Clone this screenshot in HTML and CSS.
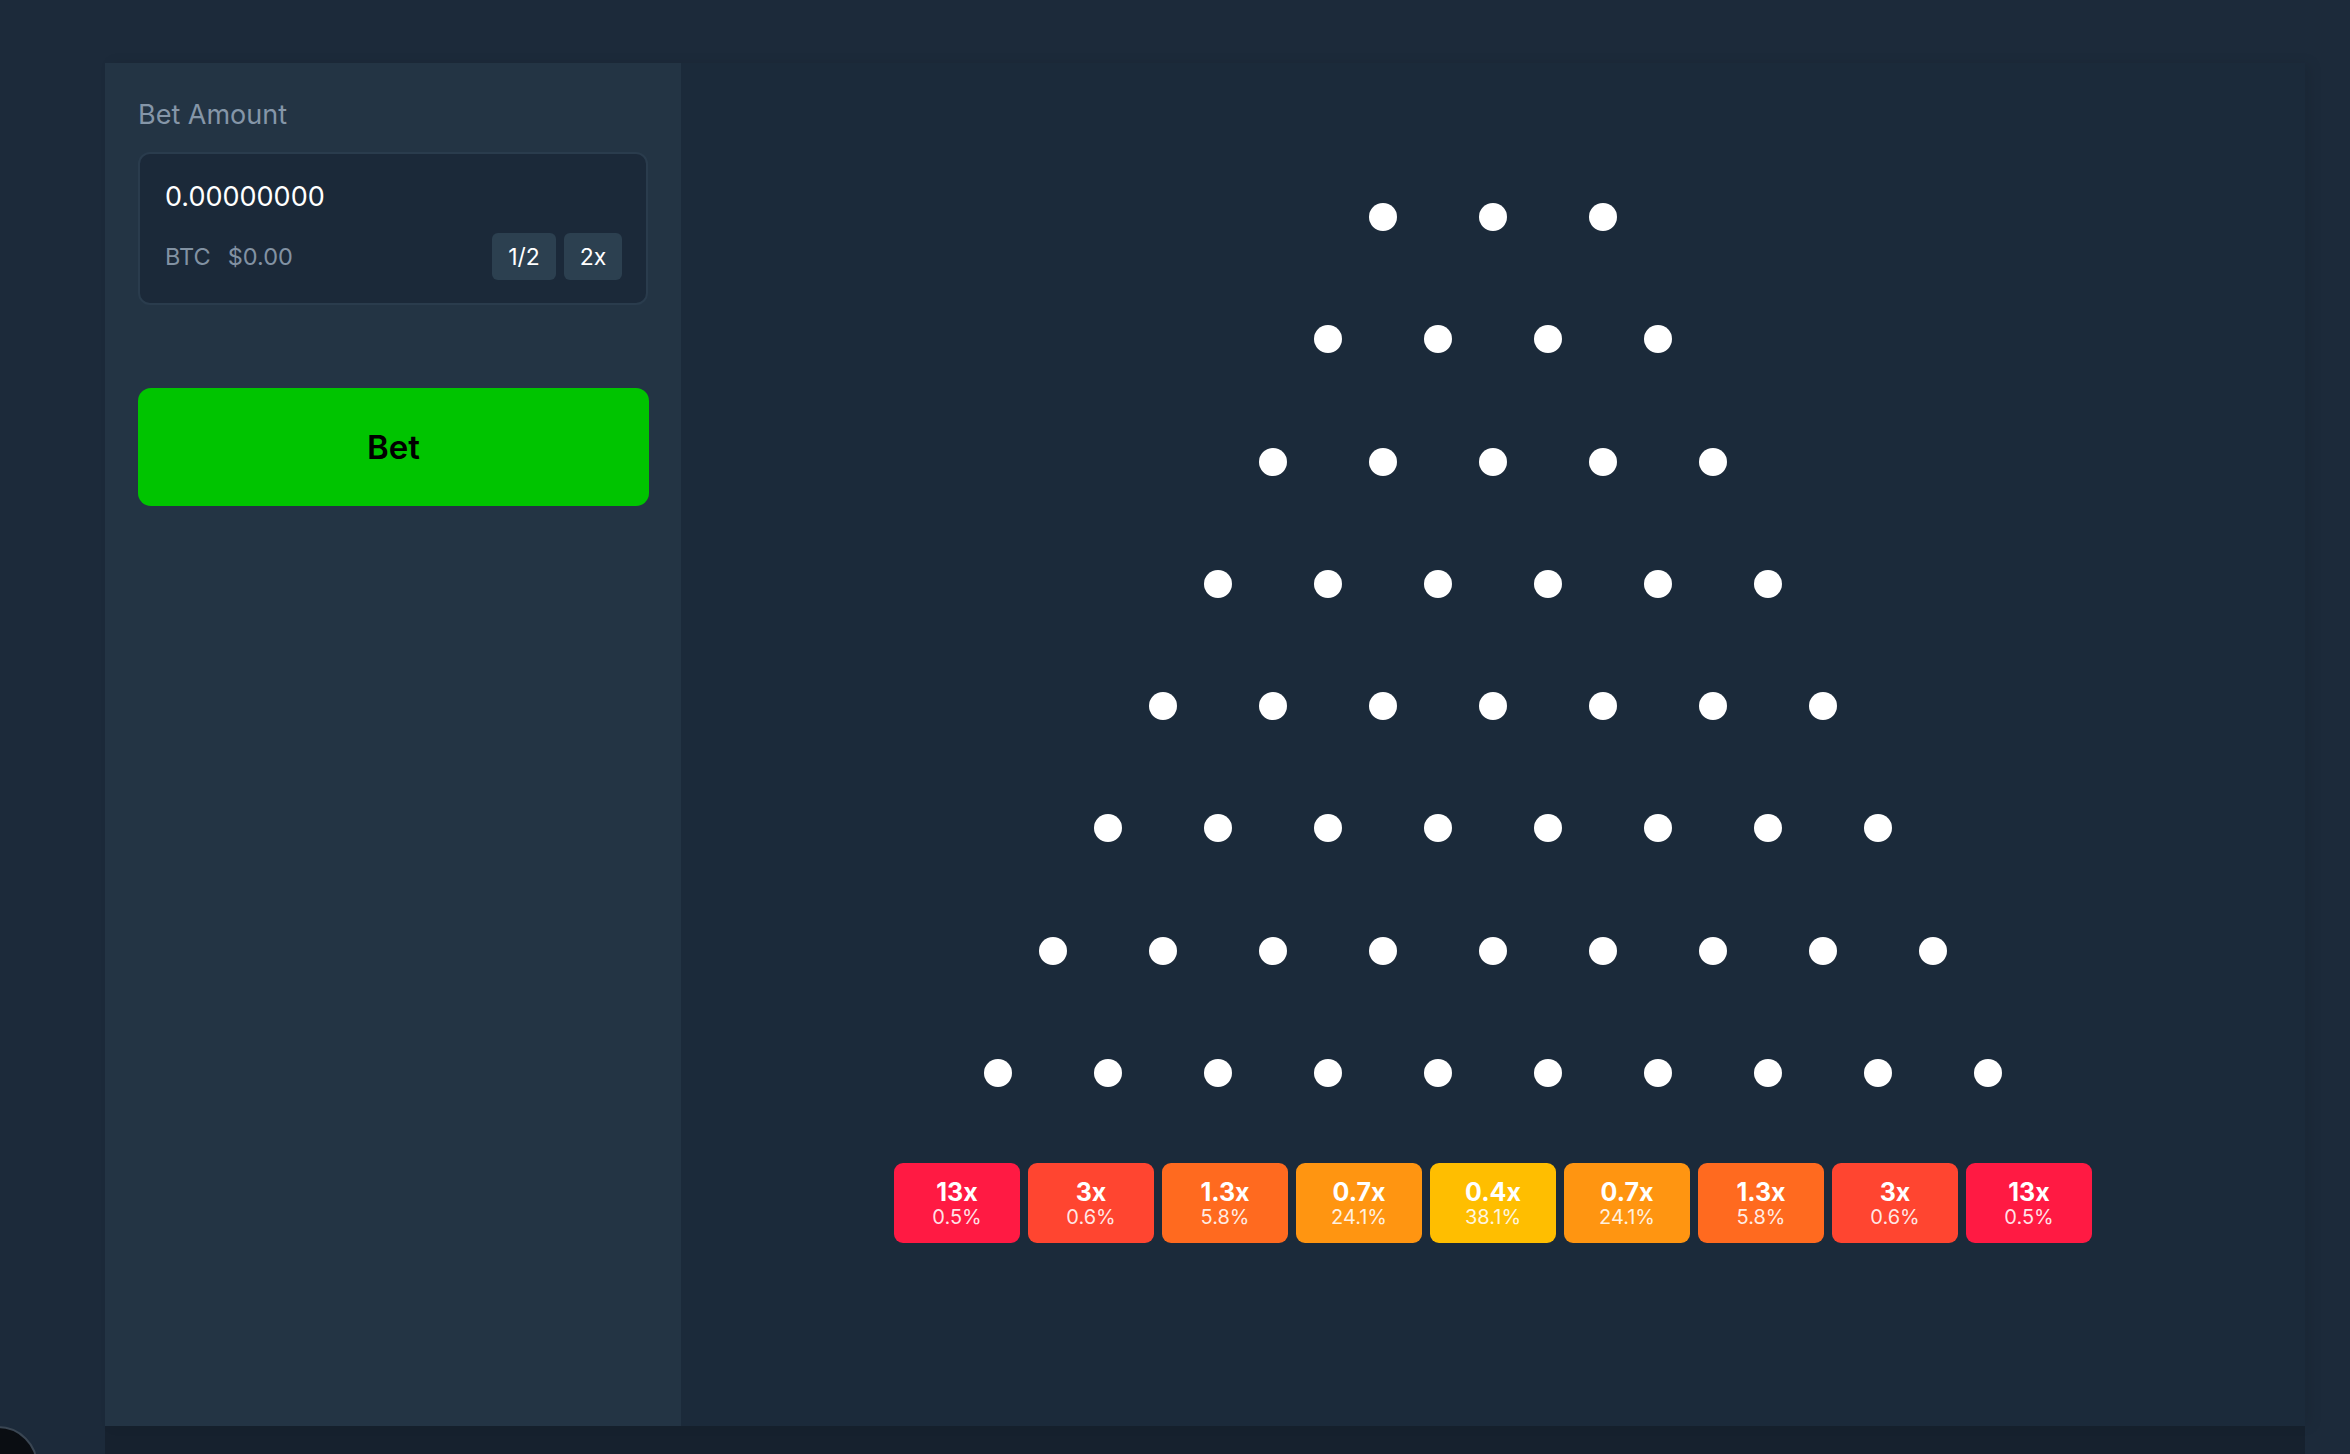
FILE: index.html
```html
<!DOCTYPE html>
<html>
<head>
<meta charset="utf-8">
<link rel="stylesheet" href="styles.css">
</head>
<body>
<div class="app">
  <aside class="sidebar">
    <div class="label">Bet Amount</div>
    <div class="amount-box">
      <div class="amount">0.00000000</div>
      <div class="amount-row">
        <div class="currency"><span>BTC</span><span>$0.00</span></div>
        <div class="quick">
          <button class="qbtn half">1/2</button>
          <button class="qbtn dbl">2x</button>
        </div>
      </div>
    </div>
    <button class="bet">Bet</button>
  </aside>
  <main class="game">
    <div class="board">
      <div class="row"><i></i><i></i><i></i></div>
      <div class="row"><i></i><i></i><i></i><i></i></div>
      <div class="row"><i></i><i></i><i></i><i></i><i></i></div>
      <div class="row"><i></i><i></i><i></i><i></i><i></i><i></i></div>
      <div class="row"><i></i><i></i><i></i><i></i><i></i><i></i><i></i></div>
      <div class="row"><i></i><i></i><i></i><i></i><i></i><i></i><i></i><i></i></div>
      <div class="row"><i></i><i></i><i></i><i></i><i></i><i></i><i></i><i></i><i></i></div>
      <div class="row"><i></i><i></i><i></i><i></i><i></i><i></i><i></i><i></i><i></i><i></i></div>
    </div>
    <div class="bins">
      <div class="bin c1"><b>13x</b><span>0.5%</span></div>
      <div class="bin c2"><b>3x</b><span>0.6%</span></div>
      <div class="bin c3"><b>1.3x</b><span>5.8%</span></div>
      <div class="bin c4"><b>0.7x</b><span>24.1%</span></div>
      <div class="bin c5"><b>0.4x</b><span>38.1%</span></div>
      <div class="bin c4"><b>0.7x</b><span>24.1%</span></div>
      <div class="bin c3"><b>1.3x</b><span>5.8%</span></div>
      <div class="bin c2"><b>3x</b><span>0.6%</span></div>
      <div class="bin c1"><b>13x</b><span>0.5%</span></div>
    </div>
  </main>
</div>
<div class="fab"></div>
</body>
</html>
```

FILE: styles.css
```css
* { box-sizing: border-box; }
html, body { margin: 0; padding: 0; }
body {
  background: #1c2a3a;
  width: 2350px;
  height: 1454px;
  overflow: hidden;
  font-family: Inter, "Noto Sans", sans-serif;
}
.app {
  margin: 63px 0 0 105px;
  width: 2200px;
  height: 1363px;
  display: flex;
  box-shadow: 0 28px 0 rgba(0, 0, 0, 0.2), 6px 0 12px rgba(0, 0, 0, 0.08);
  background: #1b2a3a;
}
.sidebar {
  width: 576px;
  flex: none;
  background: #233444;
  padding: 36px 33px 0 33px;
  display: flex;
  flex-direction: column;
}
.label {
  font-size: 27px;
  line-height: 32px;
  color: #8596a8;
  margin-bottom: 21px;
}
.amount-box {
  height: 153px;
  border: 2px solid #2a3c4d;
  border-radius: 12px;
  background: #1b2939;
  padding: 27px 24px 23px 25px;
  display: flex;
  flex-direction: column;
  gap: 20px;
}
.amount {
  font-size: 27px;
  line-height: 32px;
  color: #ffffff;
}
.amount-row {
  display: flex;
  align-items: center;
  justify-content: space-between;
  height: 47px;
}
.currency {
  display: flex;
  gap: 17px;
  font-size: 23.5px;
  color: #8292a3;
}
.quick { display: flex; gap: 8px; }
.qbtn {
  height: 47px;
  border: none;
  border-radius: 6px;
  background: #2c4050;
  color: #ffffff;
  font-family: Inter, "Noto Sans", sans-serif;
  font-size: 23px;
  padding: 0;
}
.qbtn.half { width: 64px; }
.qbtn.dbl { width: 58px; }
.bet {
  margin-top: 83px;
  height: 118px;
  width: 511px;
  border: none;
  border-radius: 13px;
  background: #00c400;
  color: #000000;
  font-family: Inter, "Noto Sans", sans-serif;
  font-size: 33px;
  font-weight: 600;
}
.game {
  flex: 1;
  display: flex;
  flex-direction: column;
  align-items: center;
  padding-top: 140px;
}
.board {
  display: flex;
  flex-direction: column;
  gap: 94.3px;
}
.row {
  display: flex;
  justify-content: center;
  gap: 82px;
}
.row i {
  display: block;
  width: 28px;
  height: 28px;
  border-radius: 50%;
  background: #ffffff;
}
.bins {
  margin-top: 76px;
  display: flex;
  gap: 8px;
}
.bin {
  width: 126px;
  height: 80px;
  border-radius: 9px;
  display: flex;
  flex-direction: column;
  align-items: center;
  justify-content: center;
  color: #ffffff;
}
.bin b {
  font-size: 25px;
  line-height: 27px;
  font-weight: 700;
}
.bin span {
  font-size: 20px;
  line-height: 22px;
  color: rgba(255, 255, 255, 0.88);
}
.c1 { background: #ff1a43; }
.c2 { background: #ff4530; }
.c3 { background: #ff6a1f; }
.c4 { background: #ff9511; }
.c5 { background: #ffbe00; }
.fab {
  position: fixed;
  left: -42px;
  top: 1426px;
  width: 80px;
  height: 80px;
  border-radius: 50%;
  background: #0a0d12;
  border: 2px solid #3a4653;
}
```
